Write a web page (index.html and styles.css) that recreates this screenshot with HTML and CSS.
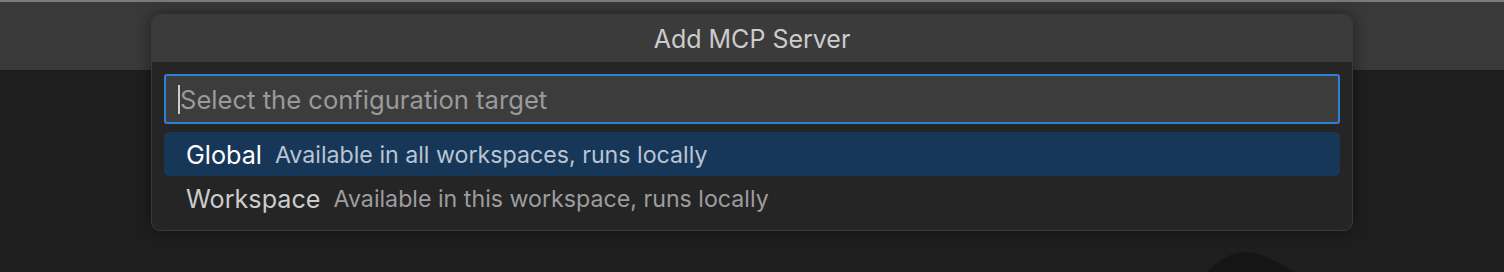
FILE: index.html
```html
<!DOCTYPE html>
<html lang="en">
<head>
    <meta charset="UTF-8">
    <title>Add MCP Server</title>
    <link rel="stylesheet" href="styles.css">
</head>
<body>
    <div class="topbar"></div>
    <div class="editor"></div>

    <!-- blob peeking from below -->
    <svg class="blob" width="90" height="22" viewBox="0 0 90 22">
        <path d="M0 22 C 12 10, 24 2, 38 1 C 52 0, 70 10, 90 22 Z" fill="#151515"/>
    </svg>

    <div class="quick-pick">
        <div class="qp-title">Add MCP Server</div>
        <div class="qp-body">
            <div class="qp-input">
                <span class="caret"></span>
                <span class="placeholder">Select the configuration target</span>
            </div>
            <ul class="qp-list">
                <li class="qp-item selected">
                    <span class="label">Global</span>
                    <span class="desc">Available in all workspaces, runs locally</span>
                </li>
                <li class="qp-item">
                    <span class="label">Workspace</span>
                    <span class="desc">Available in this workspace, runs locally</span>
                </li>
            </ul>
        </div>
    </div>
</body>
</html>
```

FILE: styles.css
```css
* {
    margin: 0;
    padding: 0;
    box-sizing: border-box;
}

body {
    width: 1504px;
    height: 272px;
    overflow: hidden;
    position: relative;
    background: #1e1e1e;
    font-family: Inter, "Noto Sans", sans-serif;
    display: flex;
    flex-direction: column;
}

.topbar {
    height: 70px;
    background: #393939;
    border-top: 2px solid #7a7a7a;
}

.editor {
    flex: 1;
    background: #1e1e1e;
}

.blob {
    position: absolute;
    left: 1206px;
    top: 251px;
}

/* Quick pick dialog */
.quick-pick {
    position: absolute;
    left: 151px;
    top: 14px;
    width: 1202px;
    height: 217px;
    background: #252525;
    border: 1px solid #3a3a3a;
    border-radius: 9px;
    overflow: hidden;
    box-shadow: 0 0 14px rgba(0, 0, 0, 0.45);
}

.qp-title {
    height: 47px;
    background: #3b3b3b;
    color: #cccccc;
    font-size: 25px;
    display: flex;
    align-items: center;
    justify-content: center;
}

.qp-body {
    padding: 12px 12px 0;
}

.qp-input {
    height: 50px;
    background: #3c3c3c;
    border: 2px solid #2f7fd6;
    border-radius: 3px;
    display: flex;
    align-items: center;
    padding-left: 12px;
}

.caret {
    width: 2px;
    height: 29px;
    background: #cccccc;
}

.placeholder {
    color: #9a9a9a;
    font-size: 25.6px;
}

.qp-list {
    list-style: none;
    margin-top: 8px;
}

.qp-item {
    height: 44px;
    display: flex;
    align-items: center;
    gap: 13px;
    padding-left: 22px;
    padding-top: 2px;
    border-radius: 5px;
}

.qp-item .label {
    color: #cccccc;
    font-size: 25.2px;
}

.qp-item .desc {
    color: #9d9d9d;
    font-size: 23.2px;
}

.qp-item.selected {
    background: #173759;
}

.qp-item.selected .label {
    color: #ffffff;
}

.qp-item.selected .desc {
    color: #b9c5d3;
}
```
